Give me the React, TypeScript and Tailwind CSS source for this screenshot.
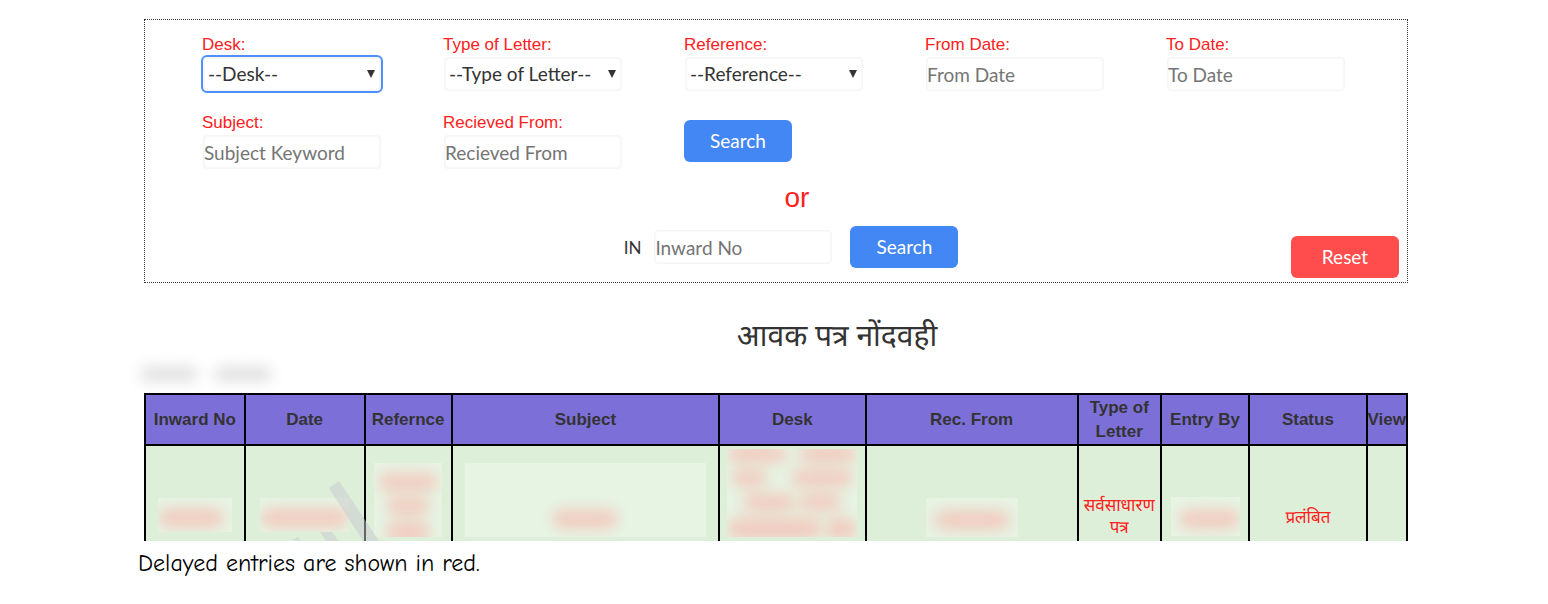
import type { ReactNode } from 'react';

const label = "font-['Liberation_Sans',Arial,sans-serif] text-[17px] leading-6 text-[#ff2020]";
const control =
  "ml-px block h-[34px] w-[178px] rounded-[4px] border border-[#f5f5f5] bg-white font-[Lato,sans-serif] text-[19px] leading-6 shadow-[inset_0_0_2px_#ebebeb] placeholder:text-[#757575] placeholder:opacity-100";
const button =
  'h-[42px] w-[108px] rounded-[6px] font-[Lato,sans-serif] text-[19px] leading-6 text-white';

function SelectField({ id, text, focused }: { id: string; text: string; focused?: boolean }) {
  return (
    <div className="h-[78px]">
      <label htmlFor={id} className={`${label} block pt-px`}>{text}:</label>
      <div className="grid w-[179px] items-center">
        <select
          id={id}
          className={`${control} col-start-1 row-start-1 appearance-none pl-1 text-[#333] ${focused ? 'outline-2 outline-[#4d90fe]' : ''}`}
        >
          <option>--{text}--</option>
        </select>
        <svg className="pointer-events-none col-start-1 row-start-1 mr-[6px] mb-px h-2 w-2 justify-self-end" viewBox="0 0 8 8" aria-hidden="true">
          <path d="M0 0h8L4 8z" fill="#333" />
        </svg>
      </div>
    </div>
  );
}

function TextField({ id, text, placeholder }: { id: string; text: string; placeholder: string }) {
  return (
    <div className="h-[78px]">
      <label htmlFor={id} className={`${label} block pt-px`}>{text}:</label>
      <input id={id} type="text" placeholder={placeholder} className={control} />
    </div>
  );
}

function Redacted({ className, children }: { className: string; children: ReactNode }) {
  return <div className={`mx-auto overflow-hidden bg-white/30 ${className}`}>{children}</div>;
}

function Smudge({ className }: { className: string }) {
  return <div className={`rounded-full bg-[#fba79f]/50 blur-[7px] ${className}`} />;
}

const columns = [
  { title: 'Inward No', width: 'w-[7.9%]' },
  { title: 'Date', width: 'w-[9.5%]' },
  { title: 'Refernce', width: 'w-[6.9%]' },
  { title: 'Subject', width: 'w-[21.2%]' },
  { title: 'Desk', width: 'w-[11.6%]' },
  { title: 'Rec. From', width: 'w-[16.8%]' },
  { title: 'Type of Letter', width: 'w-[6.6%]' },
  { title: 'Entry By', width: 'w-[7%]' },
  { title: 'Status', width: 'w-[9.3%]' },
  { title: 'View', width: 'w-[3.2%]' },
];

export default function App() {
  return (
    <main className="bg-white pt-[19px] pr-[140px] pl-36 font-['Liberation_Sans',Arial,sans-serif] text-[#333]">
      <form className="border border-dotted border-[#333] pt-3 pb-1" onSubmit={(e) => e.preventDefault()}>
        <div className="grid grid-cols-5 pl-[57px]">
          <SelectField id="desk" text="Desk" focused />
          <SelectField id="type" text="Type of Letter" />
          <SelectField id="reference" text="Reference" />
          <TextField id="from" text="From Date" placeholder="From Date" />
          <TextField id="to" text="To Date" placeholder="To Date" />
          <TextField id="subject" text="Subject" placeholder="Subject Keyword" />
          <TextField id="received" text="Recieved From" placeholder="Recieved From" />
          <div className="pt-[10px]">
            <button type="submit" className={`${button} bg-[#4387f5]`}>Search</button>
          </div>
        </div>
        <p className="-mt-[6px] pl-[42px] text-center text-[28px] leading-8 text-[#ff2020]">or</p>
        <div className="mt-3 grid grid-cols-[1fr_auto_1fr] pr-2 pl-[38px]">
          <div className="col-start-2 flex h-[42px] items-center">
            <label htmlFor="inward" className="mr-3 pt-[2px] font-[Lato,sans-serif] text-[17px] leading-6">IN</label>
            <input id="inward" type="text" placeholder="Inward No" className={control} />
            <button type="submit" className={`${button} ml-[18px] bg-[#4387f5]`}>Search</button>
          </div>
          <button type="reset" className={`${button} mt-[10px] justify-self-end bg-[#ff4d4d]`}>Reset</button>
        </div>
      </form>

      <h1 className="mt-9 pl-[122px] text-center font-['Noto_Sans_Devanagari','Noto_Sans',sans-serif] text-[30px] leading-10">
        आवक पत्र नोंदवही
      </h1>

      <div className="-ml-2 flex h-[34px] items-center gap-4 pb-1 pl-1" aria-hidden="true">
        <div className="h-4 w-[58px] rounded-full bg-[#e2e2e2] blur-[7px]" />
        <div className="h-4 w-[58px] rounded-full bg-[#e2e2e2] blur-[7px]" />
      </div>

      <div className="relative h-[148px] overflow-hidden">
        <table className="w-full table-fixed border-collapse text-[17px] leading-6">
          <thead>
            <tr className="h-[51px] bg-[#7d6fd8]">
              {columns.map((c) => (
                <th key={c.title} scope="col" className={`border-2 border-black p-0 font-bold ${c.width}`}>{c.title}</th>
              ))}
            </tr>
          </thead>
          <tbody>
            <tr className="h-[148px] bg-[#ddefd8] text-center align-top text-[#ff2020]">
              <td className="border-2 border-black p-0 pt-[52px]">
                <Redacted className="h-[34px] w-[74px] pt-[10px]"><Smudge className="mr-2 h-5" /></Redacted>
              </td>
              <td className="border-2 border-black p-0 pt-[52px]">
                <Redacted className="h-[34px] w-[89px] pt-[10px]"><Smudge className="h-5" /></Redacted>
              </td>
              <td className="border-2 border-black p-0 pt-[17px]">
                <Redacted className="flex h-[74px] w-[68px] flex-col gap-[6px] pt-[10px]">
                  <Smudge className="mx-1 h-[18px] shrink-0" />
                  <Smudge className="mx-3 h-[18px] shrink-0" />
                  <Smudge className="mx-3 h-6 shrink-0" />
                </Redacted>
              </td>
              <td className="border-2 border-black p-0 pt-[17px]">
                <Redacted className="h-[74px] w-[241px] pt-[46px]"><Smudge className="mx-auto h-5 w-[66px]" /></Redacted>
              </td>
              <td className="border-2 border-black p-0 pt-[3px]">
                <Redacted className="flex h-[88px] w-[130px] flex-col gap-[6px]">
                  <div className="-mt-1 flex shrink-0 gap-3"><Smudge className="h-[18px] w-[60px]" /><Smudge className="h-[18px] grow" /></div>
                  <div className="flex shrink-0 justify-between px-1"><Smudge className="h-[18px] w-9" /><Smudge className="h-[18px] w-[62px]" /></div>
                  <div className="flex shrink-0 gap-1 px-4"><Smudge className="h-[18px] w-[52px]" /><Smudge className="h-[18px] grow" /></div>
                  <div className="flex shrink-0 gap-1"><Smudge className="h-6 w-[94px]" /><Smudge className="h-6 grow" /></div>
                </Redacted>
              </td>
              <td className="border-2 border-black p-0 pt-[52px]">
                <Redacted className="h-[39px] w-[92px] pt-3"><Smudge className="mx-2 h-5" /></Redacted>
              </td>
              <td className="border-2 border-black p-0 pt-[50px] font-['Noto_Sans_Devanagari','Noto_Sans',sans-serif] text-[17px] leading-[22px]">
                सर्वसाधारण पत्र
              </td>
              <td className="border-2 border-black p-0 pt-[51px]">
                <Redacted className="h-[39px] w-[69px] pt-3"><Smudge className="ml-2 h-5" /></Redacted>
              </td>
              <td className="border-2 border-black p-0 pt-[62px] font-['Noto_Sans_Devanagari','Noto_Sans',sans-serif] text-[17px] leading-[22px]">
                प्रलंबित
              </td>
              <td className="border-2 border-black p-0" />
            </tr>
          </tbody>
        </table>
        <svg className="pointer-events-none absolute top-[87px] left-[145px] h-[61px] w-[90px]" viewBox="0 0 90 61" aria-hidden="true">
          <path d="M40 8L50 1L90 61H74ZM31 52H43L50 61H37ZM4 60L9 57L12 61Z" fill="#c9c9cf" fillOpacity=".5" />
        </svg>
      </div>
      <p className="-ml-[6px] pt-[6px] font-['Comic_Sans_MS','Comic_Neue',cursive] text-[24px] leading-8 text-black">
        Delayed entries are shown in red.
      </p>
    </main>
  );
}
